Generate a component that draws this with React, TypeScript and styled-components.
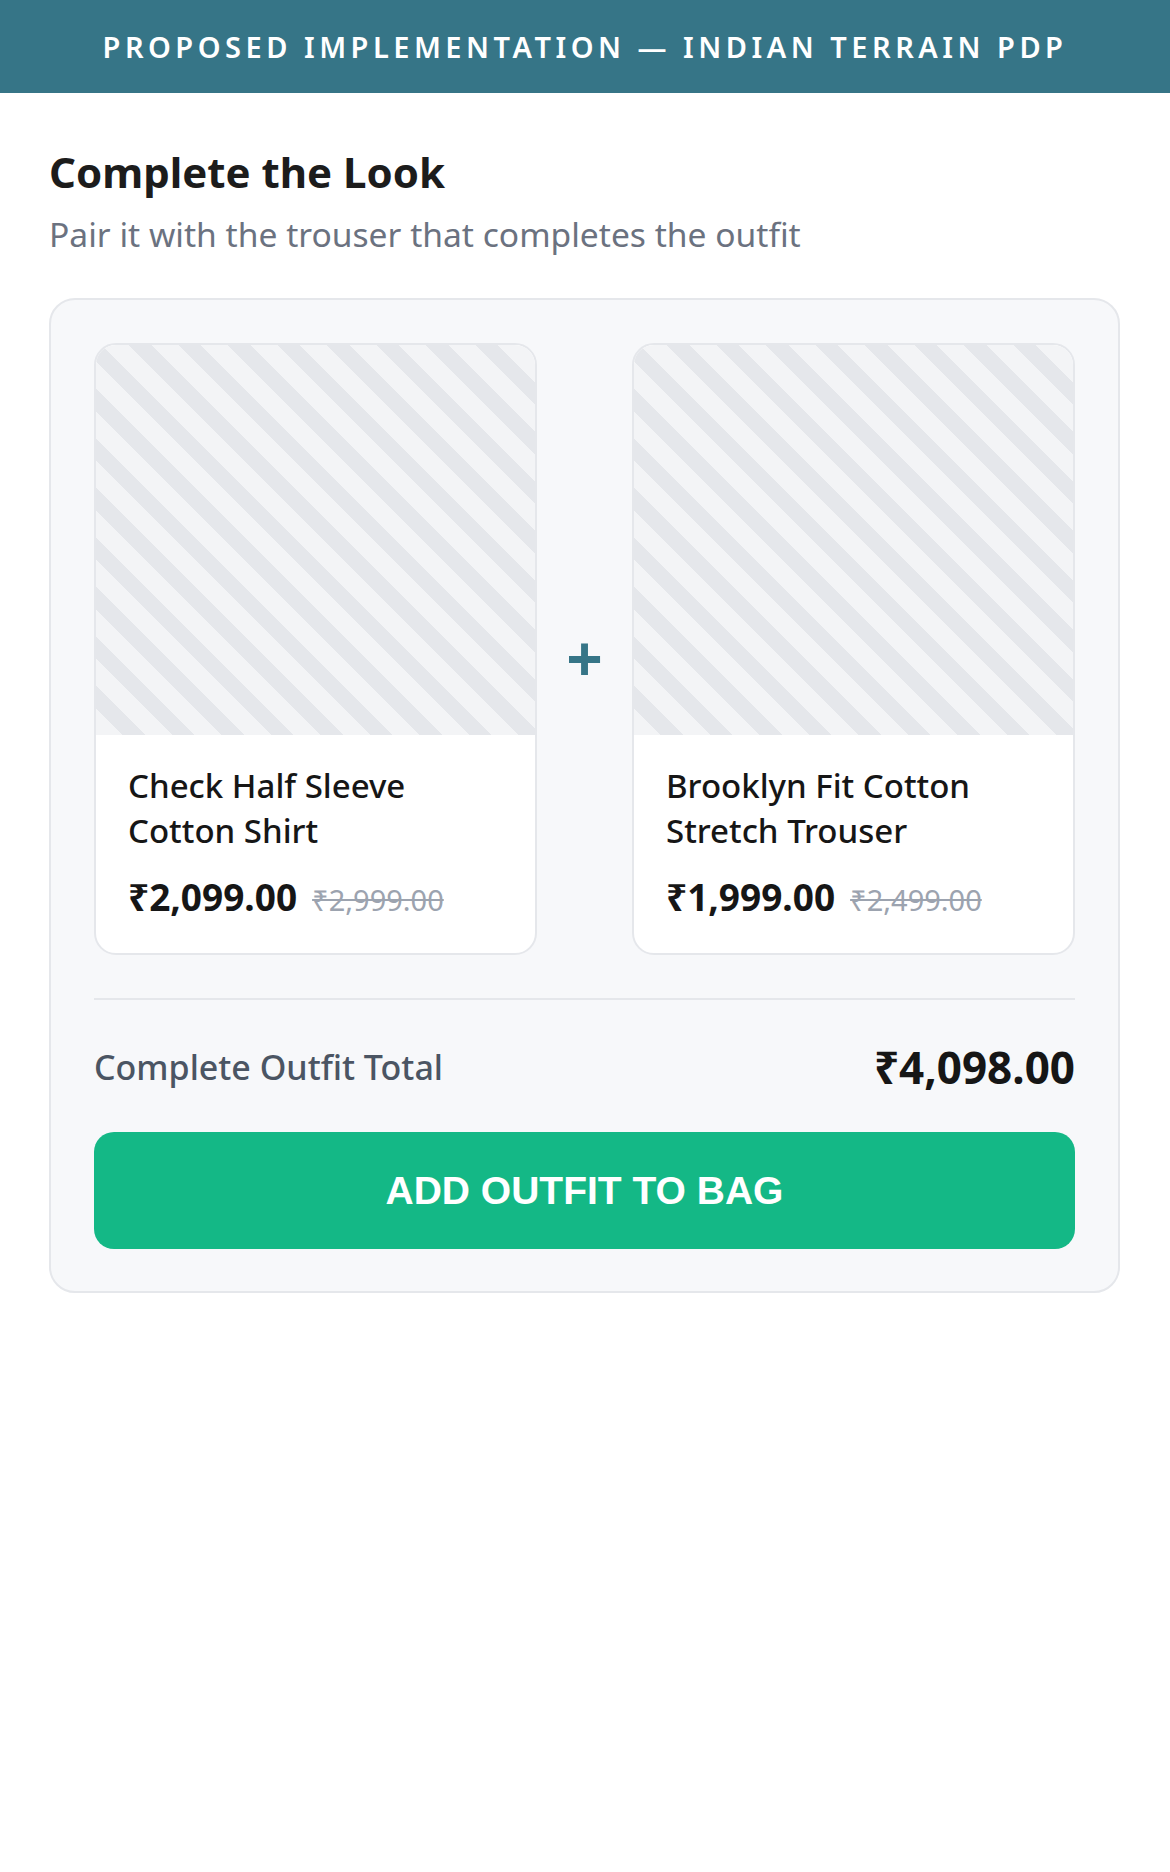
import React from "react";
import styled, { createGlobalStyle } from "styled-components";

const GlobalStyle = createGlobalStyle`
  html, body {
    margin: 0;
    padding: 0;
    background: #ffffff;
  }
  body {
    font-family: "Noto Sans", "Open Sans", sans-serif;
    color: #1a1a1a;
  }
  * { box-sizing: border-box; }
`;

const TopBar = styled.header`
  height: 93px;
  background: #367587;
  color: #ffffff;
  display: flex;
  align-items: center;
  justify-content: center;
  font-size: 29px;
  font-weight: 600;
  letter-spacing: 4.5px;
  text-transform: uppercase;
`;

const Main = styled.main`
  padding: 50px 50px 40px 49px;
`;

const Title = styled.h2`
  margin: 0;
  font-size: 42px;
  line-height: 58px;
  font-weight: 700;
  color: #1c1c1c;
`;

const Subtitle = styled.p`
  margin: 8px 0 0;
  font-size: 33.6px;
  line-height: 50px;
  color: #6b7280;
`;

const Panel = styled.section`
  margin-top: 39px;
  background: #f7f8fa;
  border: 2px solid #e5e7eb;
  border-radius: 26px;
  padding: 43px 43px 42px;
`;

const Products = styled.div`
  display: grid;
  grid-template-columns: 1fr 95px 1fr;
  align-items: stretch;
`;

const ProductCard = styled.article`
  background: #ffffff;
  border: 2px solid #e5e7eb;
  border-radius: 22px;
  overflow: hidden;
  display: flex;
  flex-direction: column;
`;

const ImagePlaceholder = styled.div`
  height: 390px;
  background: repeating-linear-gradient(
    45deg,
    #f3f4f6 0px,
    #f3f4f6 19px,
    #e5e7eb 19px,
    #e5e7eb 35px
  );
`;

const Info = styled.div`
  padding: 28px 32px 33px;
`;

const Name = styled.h3`
  margin: 0;
  font-size: 33px;
  line-height: 45px;
  font-weight: 500;
  color: #161616;
`;

const PriceRow = styled.div`
  margin-top: 21px;
  display: flex;
  align-items: baseline;
  gap: 15px;
`;

const Price = styled.span`
  font-size: 37px;
  line-height: 46px;
  font-weight: 700;
  color: #161616;
`;

const OldPrice = styled.span`
  font-size: 29px;
  color: #9ca3af;
  text-decoration: line-through;
`;

const Plus = styled.div`
  display: flex;
  align-items: center;
  justify-content: center;
  color: #367587;
  font-size: 64px;
  font-weight: 700;
  padding-top: 16px;
`;

const Summary = styled.div`
  margin-top: 43px;
  border-top: 2px solid #e5e7eb;
  padding-top: 42px;
`;

const TotalRow = styled.div`
  display: flex;
  justify-content: space-between;
  align-items: center;
  height: 50px;
`;

const TotalLabel = styled.span`
  font-size: 34px;
  font-weight: 500;
  color: #4b5563;
`;

const TotalValue = styled.span`
  font-size: 44px;
  font-weight: 700;
  color: #161616;
`;

const AddButton = styled.button`
  margin-top: 40px;
  width: 100%;
  height: 117px;
  border: none;
  border-radius: 20px;
  background: #14b886;
  color: #ffffff;
  font-family: "Liberation Sans", Arial, sans-serif;
  font-size: 39px;
  font-weight: 700;
  text-transform: uppercase;
  cursor: pointer;
`;

type Product = { name: string[]; price: string; mrp: string };

const products: Product[] = [
  { name: ["Check Half Sleeve", "Cotton Shirt"], price: "₹2,099.00", mrp: "₹2,999.00" },
  { name: ["Brooklyn Fit Cotton", "Stretch Trouser"], price: "₹1,999.00", mrp: "₹2,499.00" },
];

const Card: React.FC<{ p: Product }> = ({ p }) => (
  <ProductCard>
    <ImagePlaceholder />
    <Info>
      <Name>
        {p.name[0]}
        <br />
        {p.name[1]}
      </Name>
      <PriceRow>
        <Price>{p.price}</Price>
        <OldPrice>{p.mrp}</OldPrice>
      </PriceRow>
    </Info>
  </ProductCard>
);

export default function App() {
  return (
    <>
      <GlobalStyle />
      <TopBar>Proposed Implementation — Indian Terrain PDP</TopBar>
      <Main>
        <Title>Complete the Look</Title>
        <Subtitle>Pair it with the trouser that completes the outfit</Subtitle>
        <Panel>
          <Products>
            <Card p={products[0]} />
            <Plus>+</Plus>
            <Card p={products[1]} />
          </Products>
          <Summary>
            <TotalRow>
              <TotalLabel>Complete Outfit Total</TotalLabel>
              <TotalValue>₹4,098.00</TotalValue>
            </TotalRow>
            <AddButton>Add Outfit to Bag</AddButton>
          </Summary>
        </Panel>
      </Main>
    </>
  );
}
